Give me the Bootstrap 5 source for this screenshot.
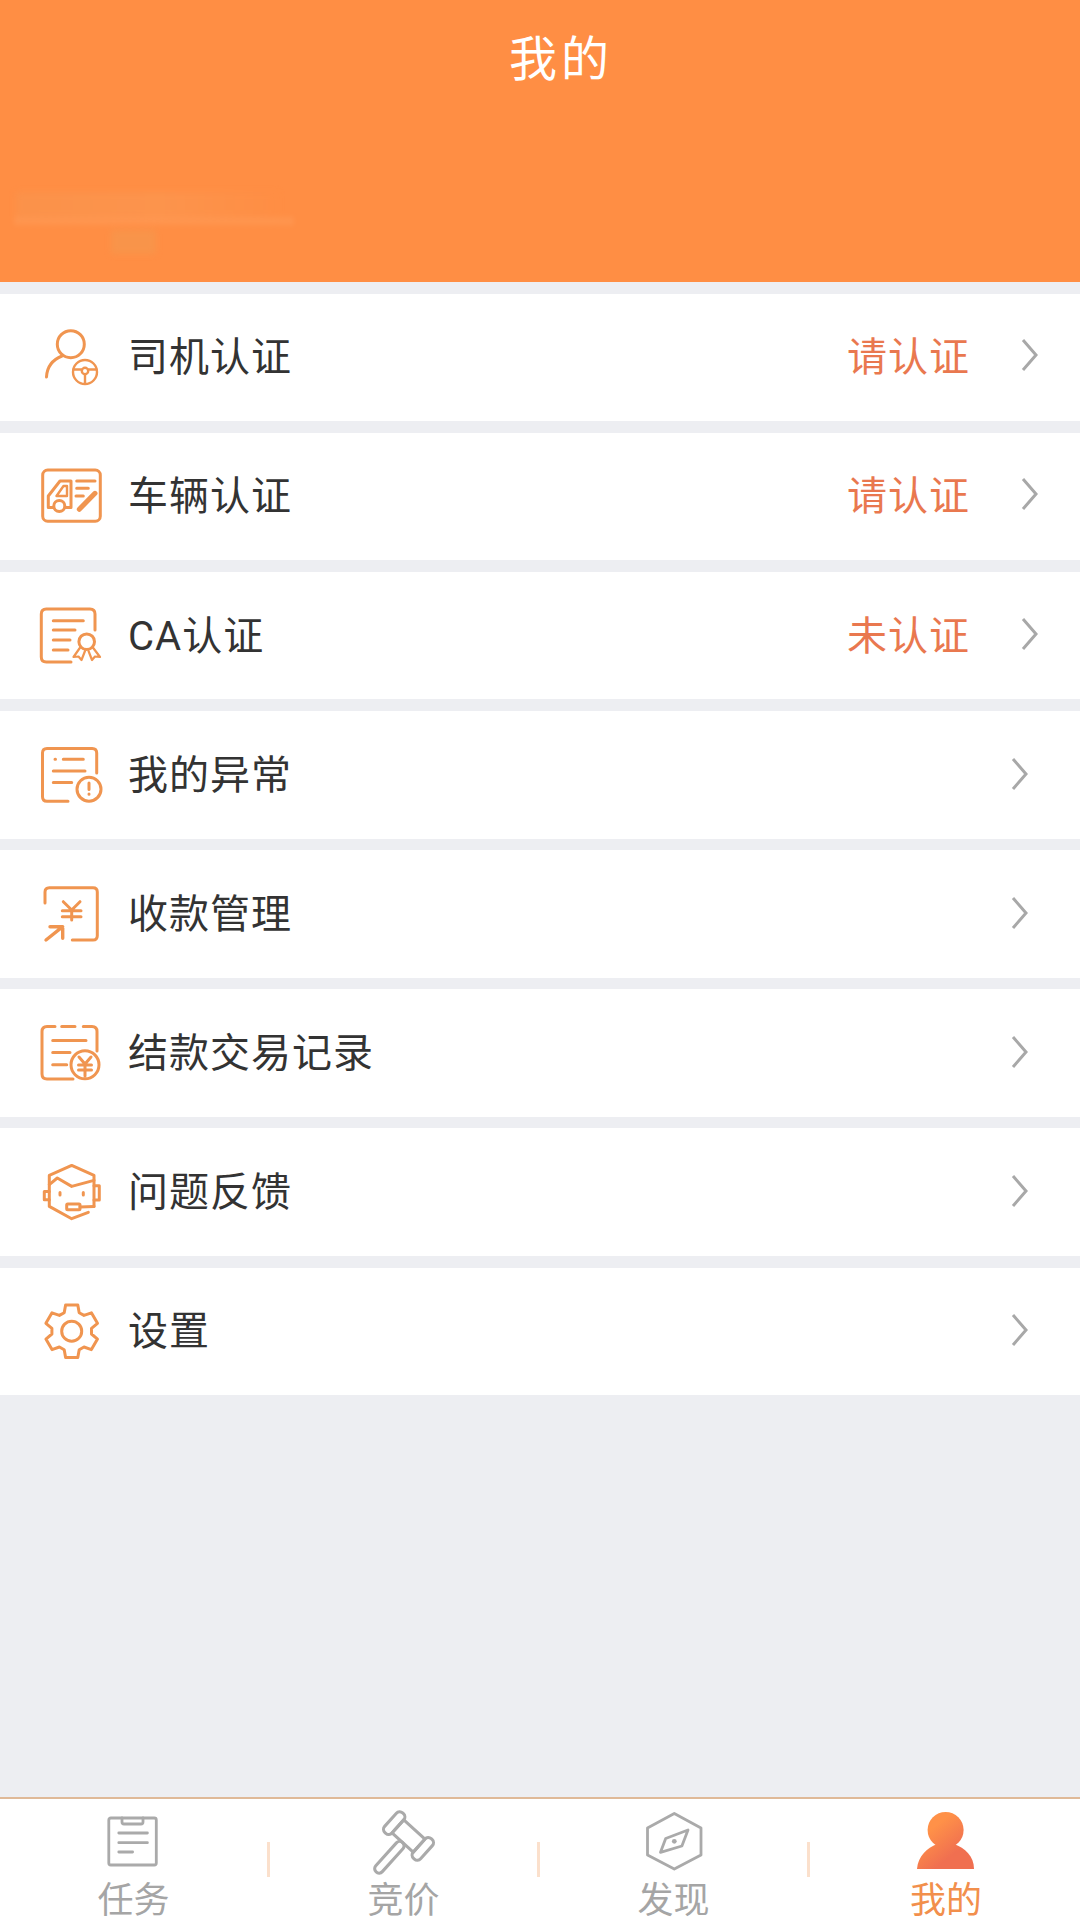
<!DOCTYPE html>
<html lang="zh-CN">
<head>
    <meta charset="UTF-8">
    <meta name="viewport" content="width=device-width, initial-scale=1.0">
    <title>我的</title>
    <link href="https://cdn.jsdelivr.net/npm/bootstrap@5.3.0/dist/css/bootstrap.min.css" rel="stylesheet">
    <style>
        body {
            background: #edeef2;
            font-family: Roboto, "Noto Sans CJK SC", sans-serif;
            color: #333;
        }
        .page-wrap { width: 1080px; height: 1920px; overflow: hidden; }

        /* header */
        .top-head { height: 282px; background: #ff8e44; color: #fff; }
        .top-title { font-size: 48px; line-height: 60px; padding-top: 30px; padding-left: 42px; letter-spacing: 4px; }
        .smudge {
            width: 276px; height: 70px; margin: 96px 0 0 16px; filter: blur(3px); opacity: .5;
            background:
                repeating-linear-gradient(90deg, rgba(255,214,170,.55) 0 4px, transparent 4px 8px) 0 32px / 100% 6px no-repeat,
                linear-gradient(90deg, #f89650, #fb9a55 55%, #ff8e44) 0 6px / 262px 26px no-repeat,
                linear-gradient(#f29a50, #f29a50) 95px 44px / 45px 24px no-repeat;
        }

        /* menu rows */
        .menu-list { padding-top: 11.5px; }
        .menu-row { height: 127.67px; margin-bottom: 11.5px; background: #fff; padding-left: 40px; padding-right: 42px; }
        .menu-row.no-status { padding-right: 52px; }
        .row-icon { width: 64px; height: 64px; flex: none; margin-right: 24px; fill: none; stroke: #f09550; stroke-width: 3; stroke-linecap: round; stroke-linejoin: round; overflow: visible; }
        .row-name { font-size: 40px; line-height: 50px; color: #333; letter-spacing: 1px; padding-top: 2px; }
        .row-status { font-size: 40px; line-height: 50px; color: #e9784f; margin-right: 51px; letter-spacing: 1px; padding-top: 2px; }
        .row-arrow { width: 17px; height: 34px; flex: none; margin-top: -4px; fill: none; stroke: #a8a8a8; stroke-width: 3; }
        .no-status .row-arrow { margin-top: -2px; }

        /* tab bar */
        .tab-bar { height: 123px; background: #fff; border-top: 2.5px solid #dfb998; margin-top: auto; }
        .tab-cell { width: 270px; padding-top: 12px; }
        .tab-cell + .tab-cell { position: relative; }
        .tab-cell + .tab-cell::before { content: ""; position: absolute; left: -3px; top: 43px; width: 3px; height: 35px; background: #fbe0cc; }
        .tab-icon { width: 60px; height: 60px; display: block; fill: none; stroke: #aaa; stroke-width: 2.8; stroke-linejoin: round; stroke-linecap: round; overflow: visible; }
        .tab-label { font-size: 36px; line-height: 34px; margin-top: 12.5px; margin-right: 3px; color: #a5a5a5; }
        .tab-cell.is-on .tab-label { color: #f28f4c; margin-right: 0; margin-left: 2px; }
    </style>
</head>
<body>
<div class="page-wrap d-flex flex-column">
    <div class="top-head">
        <div class="top-title text-center">我的</div>
        <div class="smudge"></div>
    </div>

    <div class="menu-list">
        <div class="menu-row d-flex align-items-center">
            <svg class="row-icon" viewBox="0 0 64 64">
                <circle cx="30.8" cy="19.2" r="13.5"/>
                <path d="M6.5 52C7 42 12 35 22 31"/>
                <g stroke-width="2.4">
                    <circle cx="45" cy="47" r="12"/>
                    <circle cx="45" cy="46" r="3.2"/>
                    <path d="M33.5 44.5H41.8M48.2 44.5H56.5M45 49.5V58.5"/>
                </g>
            </svg>
            <span class="row-name">司机认证</span>
            <span class="row-status ms-auto">请认证</span>
            <svg class="row-arrow" viewBox="0 0 17 34"><path d="M2 2L15 17L2 32"/></svg>
        </div>

        <div class="menu-row d-flex align-items-center">
            <svg class="row-icon" viewBox="0 0 64 64">
                <rect x="2.7" y="6" width="57.6" height="51.2" rx="5"/>
                <path d="M20 17H31V43.6H8.3V32Z"/>
                <path d="M23.5 22H27V32H16.5Z" stroke-width="2.4"/>
                <circle cx="19.3" cy="42" r="5.5" fill="#fff"/>
                <path d="M36.7 17H55M36.7 24.3H48.3M36 32H43.3"/>
                <path d="M39.3 45.3L55 29.3" stroke-width="5"/>
            </svg>
            <span class="row-name">车辆认证</span>
            <span class="row-status ms-auto">请认证</span>
            <svg class="row-arrow" viewBox="0 0 17 34"><path d="M2 2L15 17L2 32"/></svg>
        </div>

        <div class="menu-row d-flex align-items-center">
            <svg class="row-icon" viewBox="0 0 64 64">
                <path d="M55 26V10q0-5-5-5H6.3q-5 0-5 5V53q0 5 5 5H31"/>
                <path d="M13.3 16.7H43.3M13.3 26H35M13.3 36H30M13.3 46H28"/>
                <circle cx="46.7" cy="37.7" r="7.8"/>
                <path d="M40.5 43L33.5 53L38.5 52.5L41.500 56L45 47M52.500 43L60 53L55 52.500L52 56L48.500 47" stroke-width="2.2"/>
            </svg>
            <span class="row-name">CA认证</span>
            <span class="row-status ms-auto">未认证</span>
            <svg class="row-arrow" viewBox="0 0 17 34"><path d="M2 2L15 17L2 32"/></svg>
        </div>

        <div class="menu-row no-status d-flex align-items-center">
            <svg class="row-icon" viewBox="0 0 64 64">
                <path d="M56.7 30V10q0-4.5-4.5-4.5H7q-4.500 0-4.500 4.500V53.700q0 4.500 4.500 4.500H28"/>
                <path d="M15 16.200H15.500M23.300 16.200H43.300M13.300 27.900H45M13.300 39.500H31.700"/>
                <circle cx="49" cy="46.200" r="12"/>
                <path d="M49 40V46.500M49 51V51.300"/>
            </svg>
            <span class="row-name">我的异常</span>
            <svg class="row-arrow ms-auto" viewBox="0 0 17 34"><path d="M2 2L15 17L2 32"/></svg>
        </div>

        <div class="menu-row no-status d-flex align-items-center">
            <svg class="row-icon" viewBox="0 0 64 64">
                <path d="M5 21V10q0-4.300 4.300-4.300H53q4.300 0 4.300 4.300V53.700q0 4.300-4.300 4.300H32.300"/>
                <path d="M23.300 19.700L31.700 28L40 19.700M22.300 28.700H41M22.300 34.700H41M31.700 28V38"/>
                <path d="M6 58L22.700 44.700M10 44.700H22.700V56.300" stroke-width="3.400"/>
            </svg>
            <span class="row-name">收款管理</span>
            <svg class="row-arrow ms-auto" viewBox="0 0 17 34"><path d="M2 2L15 17L2 32"/></svg>
        </div>

        <div class="menu-row no-status d-flex align-items-center">
            <svg class="row-icon" viewBox="0 0 64 64">
                <path d="M15 5.500H7q-5 0-5 5V53q0 5 5 5H33M21.700 5.500H35M43.300 5.500H52q5 0 5 5V30"/>
                <path d="M12.700 19.500H46M12.700 31.500H30M12.700 43.800H26.700"/>
                <circle cx="45" cy="43.800" r="14" fill="#fff"/>
                <path d="M39 36L45 43L51 36M38.500 44H51.500M38.500 49H51.500M45 43V55" stroke-width="3"/>
            </svg>
            <span class="row-name">结款交易记录</span>
            <svg class="row-arrow ms-auto" viewBox="0 0 17 34"><path d="M2 2L15 17L2 32"/></svg>
        </div>

        <div class="menu-row no-status d-flex align-items-center">
            <svg class="row-icon" viewBox="0 0 64 64">
                <path d="M48.300 52.400L31.700 58.700L9.300 46.400V15.400L31.700 5.400L54 15.400V46.400"/>
                <path d="M9.300 24.700L17.300 18L31.700 26.400L54 20.400"/>
                <path d="M9.300 31.400H4.300V39.700H9.300M54 25.700H59.300V40H54"/>
                <path d="M20 32.500V35M43.300 32.500V35"/>
                <rect x="26.700" y="44" width="13.300" height="5.700" rx="1"/>
                <path d="M40 47L54 46.400"/>
            </svg>
            <span class="row-name">问题反馈</span>
            <svg class="row-arrow ms-auto" viewBox="0 0 17 34"><path d="M2 2L15 17L2 32"/></svg>
        </div>

        <div class="menu-row no-status d-flex align-items-center">
            <svg class="row-icon" viewBox="0 0 64 64">
                <g transform="translate(31.700 32.200)">
                    <polygon points="-7.500,-18.500 -6.100,-26.300 6.100,-26.300 7.500,-18.500 12.300,-15.800 19.700,-18.400 25.800,-7.900 19.800,-2.800 19.800,2.800 25.800,7.900 19.700,18.400 12.300,15.800 7.500,18.500 6.100,26.300 -6.100,26.300 -7.500,18.500 -12.300,15.800 -19.700,18.400 -25.800,7.900 -19.800,2.800 -19.800,-2.800 -25.800,-7.900 -19.700,-18.400 -12.300,-15.800"/>
                    <circle r="10"/>
                </g>
            </svg>
            <span class="row-name">设置</span>
            <svg class="row-arrow ms-auto" viewBox="0 0 17 34"><path d="M2 2L15 17L2 32"/></svg>
        </div>
    </div>

    <div class="tab-bar d-flex">
        <div class="tab-cell d-flex flex-column align-items-center">
            <svg class="tab-icon" viewBox="0 0 60 60">
                <rect x="3.800" y="7" width="47.500" height="47" rx="2"/>
                <path d="M17 7V11q0 2 2 2H36q2 0 2-2V7M13.800 22H42.400M13.800 31.700H42.400M13.800 41H27.600"/>
            </svg>
            <div class="tab-label">任务</div>
        </div>
        <div class="tab-cell d-flex flex-column align-items-center">
            <svg class="tab-icon" viewBox="0 0 60 60">
                <g transform="translate(33.500 25) rotate(42) scale(1.1)">
                    <rect x="-22" y="-12" width="9" height="24" rx="4"/>
                    <rect x="13" y="-12" width="9" height="24" rx="4"/>
                    <rect x="-13" y="-8" width="26" height="16"/>
                    <rect x="-4" y="8" width="8" height="36" rx="4"/>
                </g>
            </svg>
            <div class="tab-label">竞价</div>
        </div>
        <div class="tab-cell d-flex flex-column align-items-center">
            <svg class="tab-icon" viewBox="0 0 60 60">
                <path d="M29.300 2.500L56 17V44L29.300 58L2.500 44V17Z"/>
                <path d="M43 19L36.900 35L15.500 41.300L20.700 27.500Z"/>
                <circle cx="29.300" cy="30.300" r="2.400" fill="#aaa" stroke="none"/>
            </svg>
            <div class="tab-label">发现</div>
        </div>
        <div class="tab-cell is-on d-flex flex-column align-items-center">
            <svg class="tab-icon" viewBox="0 0 60 60">
                <defs>
                    <linearGradient id="personFill" gradientUnits="userSpaceOnUse" x1="14" y1="10" x2="46" y2="50">
                        <stop offset="0.15" stop-color="#ff9148"/>
                        <stop offset="0.8" stop-color="#f06f50"/>
                    </linearGradient>
                </defs>
                <circle cx="30.600" cy="19" r="18" fill="url(#personFill)" stroke="none"/>
                <path d="M2 58C3 45 12 37 22 33H39C50 37 59 45 59 58Z" fill="url(#personFill)" stroke="none"/>
            </svg>
            <div class="tab-label">我的</div>
        </div>
    </div>
</div>
<script src="https://cdn.jsdelivr.net/npm/bootstrap@5.3.0/dist/js/bootstrap.bundle.min.js"></script>
</body>
</html>
